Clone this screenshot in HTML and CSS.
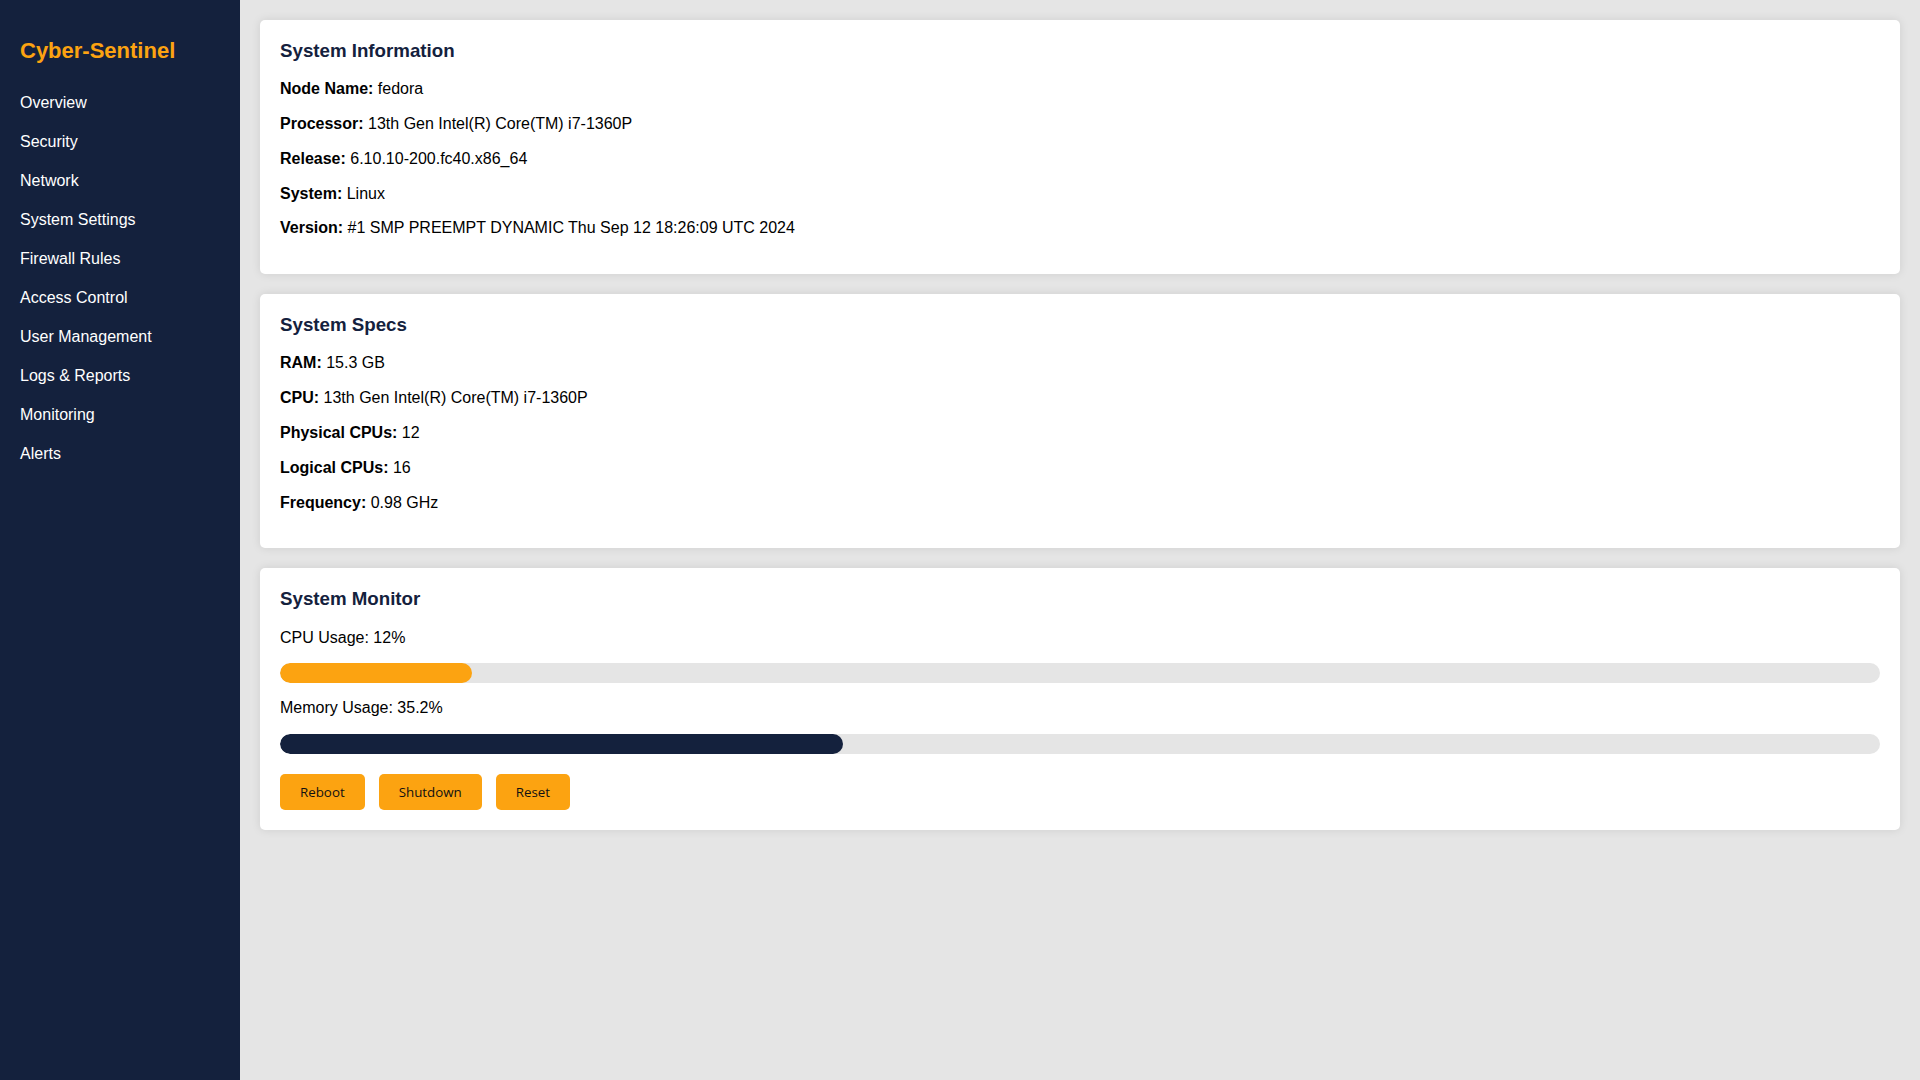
FILE: index.html
```html
<!DOCTYPE html>
<html lang="en">
<head>
<meta charset="utf-8">
<title>Cyber-Sentinel</title>
<link rel="stylesheet" href="styles.css">
</head>
<body>
<aside class="sidebar">
  <h2 class="brand">Cyber-Sentinel</h2>
  <ul class="nav">
    <li>Overview</li>
    <li>Security</li>
    <li>Network</li>
    <li>System Settings</li>
    <li>Firewall Rules</li>
    <li>Access Control</li>
    <li>User Management</li>
    <li>Logs &amp; Reports</li>
    <li>Monitoring</li>
    <li>Alerts</li>
  </ul>
</aside>
<main class="main">
  <section class="card">
    <h3 class="card-title">System Information</h3>
    <p><strong>Node Name:</strong> fedora</p>
    <p><strong>Processor:</strong> 13th Gen Intel(R) Core(TM) i7-1360P</p>
    <p><strong>Release:</strong> 6.10.10-200.fc40.x86_64</p>
    <p><strong>System:</strong> Linux</p>
    <p><strong>Version:</strong> #1 SMP PREEMPT DYNAMIC Thu Sep 12 18:26:09 UTC 2024</p>
  </section>
  <section class="card">
    <h3 class="card-title">System Specs</h3>
    <p><strong>RAM:</strong> 15.3 GB</p>
    <p><strong>CPU:</strong> 13th Gen Intel(R) Core(TM) i7-1360P</p>
    <p><strong>Physical CPUs:</strong> 12</p>
    <p><strong>Logical CPUs:</strong> 16</p>
    <p><strong>Frequency:</strong> 0.98 GHz</p>
  </section>
  <section class="card card-monitor">
    <h3 class="card-title">System Monitor</h3>
    <p class="label">CPU Usage: 12%</p>
    <div class="bar"><div class="fill fill-cpu" style="width: 12%"></div></div>
    <p class="label">Memory Usage: 35.2%</p>
    <div class="bar"><div class="fill fill-mem" style="width: 35.2%"></div></div>
    <div class="actions">
      <button class="btn">Reboot</button>
      <button class="btn">Shutdown</button>
      <button class="btn">Reset</button>
    </div>
  </section>
</main>
</body>
</html>
```
FILE: styles.css
```css
* {
  box-sizing: border-box;
}

html, body {
  margin: 0;
  padding: 0;
}

body {
  display: flex;
  min-height: 100vh;
  background: #e5e5e5;
  font-family: "Liberation Sans", Arial, sans-serif;
  font-size: 16px;
  color: #000;
}

.sidebar {
  width: 240px;
  flex: 0 0 240px;
  min-height: 100vh;
  background: #14213d;
  padding: 20px;
}

.brand {
  margin: 18px 0 20px;
  font-size: 22px;
  font-weight: bold;
  color: #fca311;
  line-height: 25px;
}

.nav {
  list-style: none;
  margin: 0;
  padding: 0;
}

.nav li {
  color: #ffffff;
  padding: 10px 0;
  line-height: 19px;
}

.main {
  flex: 1;
  padding: 20px;
  display: flex;
  flex-direction: column;
  gap: 20px;
}

.card {
  background: #ffffff;
  border-radius: 5px;
  padding: 20px;
  box-shadow: 0 0 10px rgba(0, 0, 0, 0.1);
}

.card-title {
  margin: 0 0 18.72px;
  font-size: 18.72px;
  line-height: 21.5px;
  color: #14213d;
}

.card p {
  margin: 16px 0;
  line-height: 18.8px;
}

.card p:first-of-type {
  margin-top: 0;
}

.card-monitor p.label {
  margin: 0 0 16px;
}

.card-monitor .bar + p.label {
  margin-top: 16px;
}

.bar {
  height: 20px;
  background: #e5e5e5;
  border-radius: 10px;
  overflow: hidden;
}

.fill {
  height: 100%;
  border-radius: 10px;
}

.fill-cpu {
  background: #fca311;
}

.fill-mem {
  background: #14213d;
}

.actions {
  display: flex;
  gap: 14px;
  margin-top: 20px;
}

.btn {
  background: #fca311;
  color: #111;
  border: none;
  border-radius: 5px;
  padding: 10px 20px;
  font-family: "Open Sans", "Noto Sans", sans-serif;
  font-size: 13.33px;
  line-height: 16px;
}
```
